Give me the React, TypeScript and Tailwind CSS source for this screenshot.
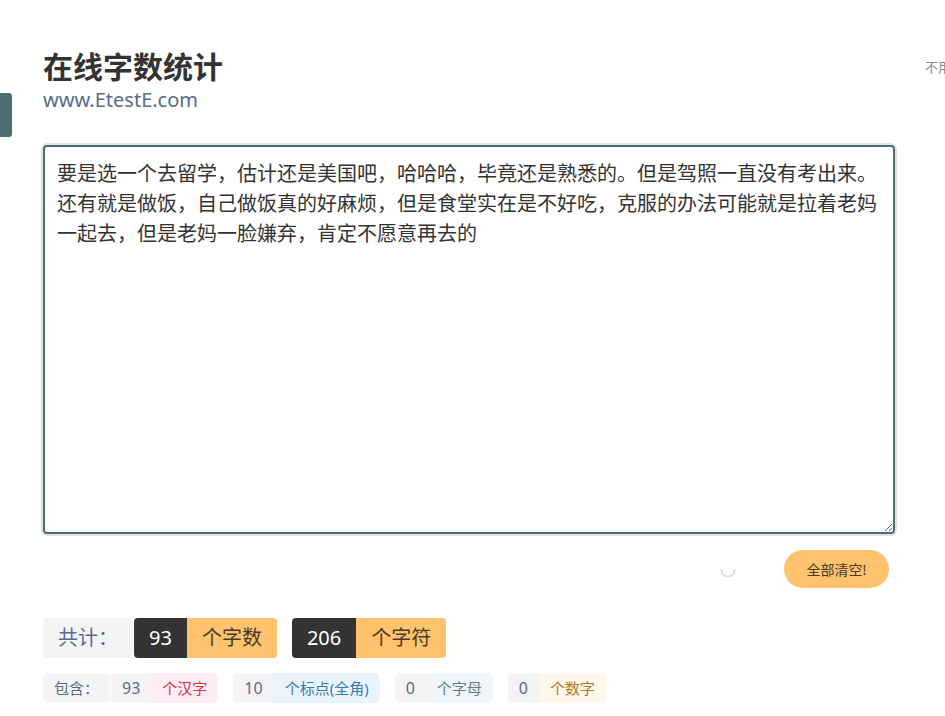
import React from "react";

const TEXT =
  "要是选一个去留学，估计还是美国吧，哈哈哈，毕竟还是熟悉的。但是驾照一直没有考出来。还有就是做饭，自己做饭真的好麻烦，但是食堂实在是不好吃，克服的办法可能就是拉着老妈一起去，但是老妈一脸嫌弃，肯定不愿意再去的";

export default function App() {
  return (
    <div className="relative min-h-screen w-full overflow-hidden bg-white font-['Noto_Sans','Noto_Sans_CJK_SC',sans-serif]">
      <div className="absolute left-0 top-[93px] h-[44px] w-[12px] rounded-r-[3px] bg-[#4f6e72]" />
      <div className="flex pl-[43px] pt-[48px]">
        <main className="w-[852px] shrink-0">
          <h1 className="text-[30px] font-bold leading-[38px] text-[#333]">在线字数统计</h1>
          <div className="text-[20px] leading-[28px] text-[#5a6b8c]">www.EtestE.com</div>
          <textarea
            defaultValue={TEXT}
            className="mt-[31px] block h-[389px] w-[852px] rounded-[4px] border-2 border-[#4e6b70] px-3 py-3 text-[20px] leading-[30px] text-[#333] shadow-[0_0_0_2px_#dde4e6] outline-none"
          />
          <div className="mt-[16px] flex items-center justify-end pr-[6px]">
            <svg width="18" height="18" viewBox="0 0 18 18" className="mr-[47px]">
              <path d="M2.5 10 A6.5 6.5 0 0 0 15.5 10" fill="none" stroke="#dcdcdc" strokeWidth="2" strokeLinecap="round" />
            </svg>
            <button className="h-[38px] w-[105px] rounded-full bg-[#ffc36e] text-[14px] text-[#4a3a2a]">
              全部清空!
            </button>
          </div>
          <div className="mt-[30px] flex h-[40px] items-stretch text-[20px] leading-[40px]">
            <span className="rounded-[4px] bg-[#f4f4f5] px-[15px] text-[#5a6b8c]">共计：</span>
            <span className="ml-px rounded-l-[4px] bg-[#333] px-[15px] text-white">93</span>
            <span className="rounded-r-[4px] bg-[#ffc36e] px-[15px] text-[#4a3a2a]">个字数</span>
            <span className="ml-[15px] rounded-l-[4px] bg-[#333] px-[15px] text-white">206</span>
            <span className="rounded-r-[4px] bg-[#ffc36e] px-[15px] text-[#4a3a2a]">个字符</span>
          </div>
          <div className="mt-[15px] flex h-[30px] items-stretch text-[15px] leading-[30px]">
            <span className="rounded-[5px] bg-[#f4f4f5] px-[11px] text-[#5a6b8c]">包含：</span>
            <span className="ml-px rounded-l-[5px] bg-[#f4f4f5] px-[11px] text-[16px] text-[#5a6b8c]">93</span>
            <span className="rounded-r-[5px] bg-[#ffeef1] px-[11px] text-[#d0304a]">个汉字</span>
            <span className="ml-[15px] rounded-l-[5px] bg-[#f4f4f5] px-[11px] text-[16px] text-[#5a6b8c]">10</span>
            <span className="rounded-r-[5px] bg-[#ebf4fc] px-[11px] text-[#3a78b0]">个标点(全角)</span>
            <span className="ml-[15px] rounded-l-[5px] bg-[#f4f4f5] px-[11px] text-[16px] text-[#5a6b8c]">0</span>
            <span className="rounded-r-[5px] bg-[#f0f5f7] px-[11px] text-[#5f7e8d]">个字母</span>
            <span className="ml-[15px] rounded-l-[5px] bg-[#f4f4f5] px-[11px] text-[16px] text-[#5a6b8c]">0</span>
            <span className="rounded-r-[5px] bg-[#fff6ec] px-[11px] text-[#b5771c]">个数字</span>
          </div>
        </main>
        <aside className="ml-[30px] whitespace-nowrap pt-[10px] text-[13px] text-[#888]">不用注册，免费使用</aside>
      </div>
    </div>
  );
}
